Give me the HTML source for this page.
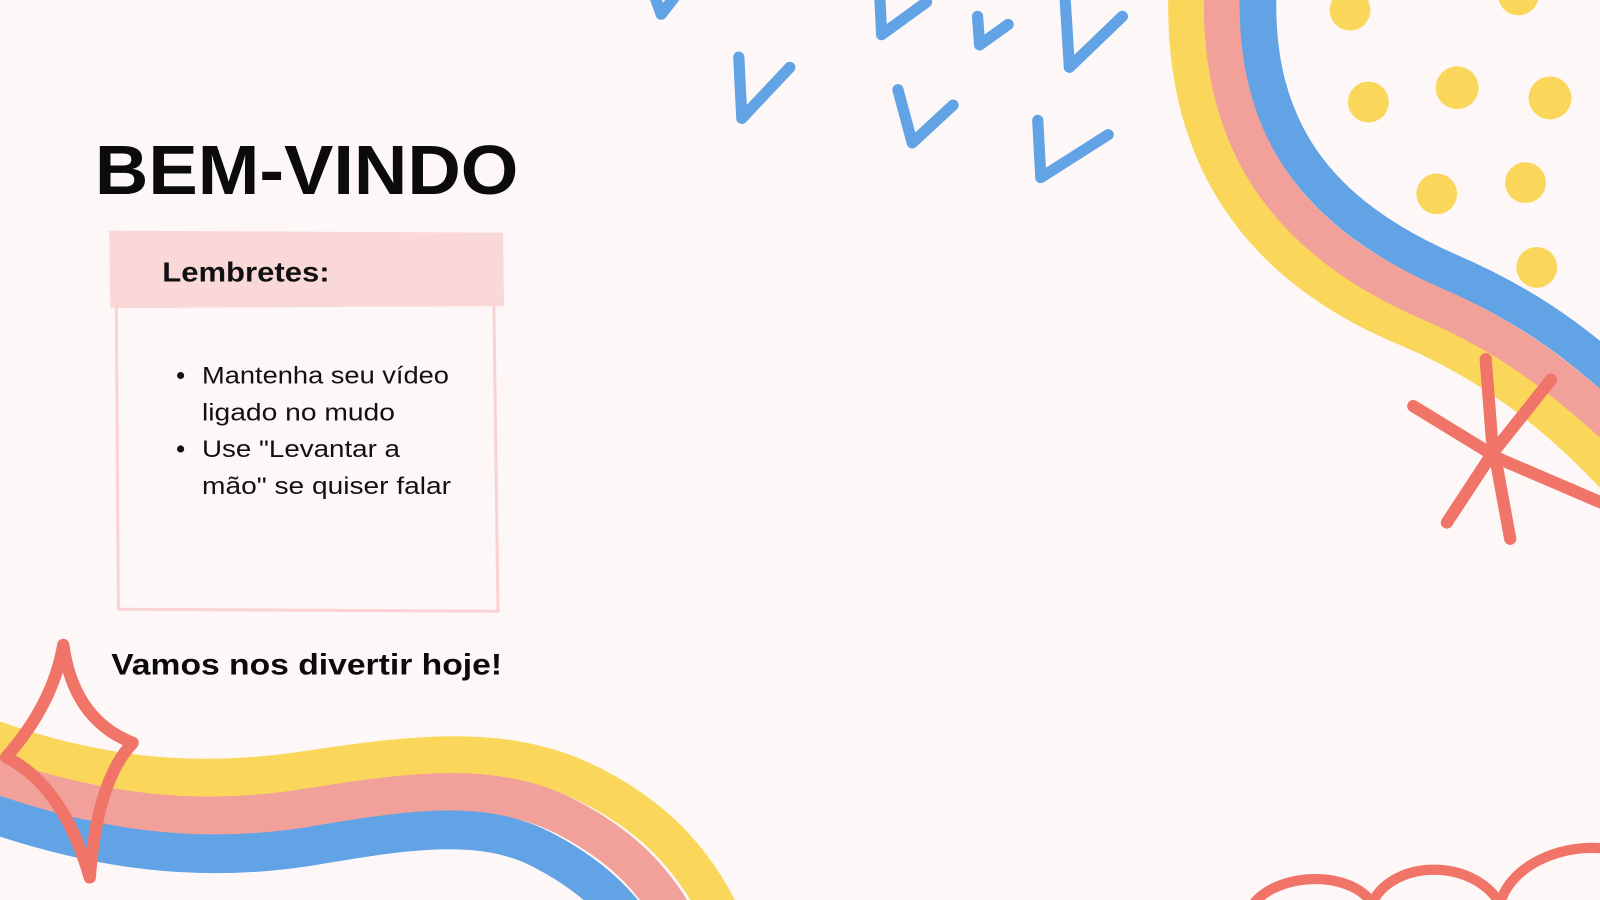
<!DOCTYPE html>
<html><head><meta charset="utf-8"><style>
html,body{margin:0;padding:0;background:#fdf8f7;}
svg{display:block;}
</style></head><body>
<svg width="1600" height="900" viewBox="0 0 1568 882" xmlns="http://www.w3.org/2000/svg">
<rect width="1568" height="882" fill="#fdf8f7"/>
<!-- top-right rainbow -->
<g fill="none" stroke-width="36">
<path d="M1163,-10 C1158,150 1230,260 1380,322 C1460,356 1525,405 1585,470" stroke="#fad75a"/>
<path d="M1198,-10 C1193,140 1262,236 1400,296 C1480,330 1532,372 1585,420" stroke="#f2a19a"/>
<path d="M1233,-10 C1228,128 1292,210 1420,266 C1492,297 1540,332 1585,372" stroke="#62a3e6"/>
</g>
<!-- dots -->
<g fill="#fad75a">
<circle cx="1323" cy="10" r="20"/><circle cx="1488" cy="-5" r="20"/>
<circle cx="1341" cy="100" r="20"/><circle cx="1428" cy="86" r="21"/><circle cx="1519" cy="96" r="21"/>
<circle cx="1408" cy="190" r="20"/><circle cx="1495" cy="179" r="20"/><circle cx="1506" cy="262" r="20"/>
</g>
<!-- asterisk -->
<g stroke="#f07468" stroke-width="12" stroke-linecap="round" fill="none">
<path d="M1456,352 L1462,430 L1480,528"/>
<path d="M1520,372 L1462,445 L1418,512"/>
<path d="M1385,398 L1470,450 L1575,495"/>
</g>
<!-- blue checks -->
<g stroke="#62a3e6" stroke-width="11" stroke-linecap="round" stroke-linejoin="round" fill="none">
<path d="M640,-8 L648,14 L662,-4"/>
<path d="M724,56 L727,116 L774,66"/>
<path d="M862,-8 L864,34 L908,2"/>
<path d="M958,16 L960,44 L988,24"/>
<path d="M1044,2 L1048,66 L1100,16"/>
<path d="M880,88 L894,140 L934,103"/>
<path d="M1017,118 L1020,174 L1086,132"/>
</g>
<!-- bottom rainbow -->
<g fill="none" stroke-width="38">
<path d="M-20,720 C100,765 200,770 300,755 C400,740 490,728 570,765 C640,798 680,842 708,900" stroke="#fad75a"/>
<path d="M-20,757 C100,800 200,808 300,792 C400,776 480,765 550,798 C610,828 640,862 662,900" stroke="#f2a19a"/>
<path d="M-20,793 C100,836 200,845 300,830 C400,813 470,802 530,832 C575,855 600,880 615,900" stroke="#62a3e6"/>
</g>
<!-- coral star -->
<path d="M62,632 Q72,705 130,728 Q95,765 88,860 Q62,770 6,742 Q52,690 62,632 Z" fill="none" stroke="#f07468" stroke-width="12" stroke-linejoin="round"/>
<!-- bottom right loops -->
<path d="M1225,892 C1240,858 1318,848 1345,885 C1362,845 1440,838 1470,885 C1482,845 1535,826 1575,832" fill="none" stroke="#f07468" stroke-width="10" stroke-linecap="round"/>
<!-- title -->
<text x="93" y="190" font-family="Liberation Sans, sans-serif" font-weight="bold" font-size="68" textLength="415" lengthAdjust="spacingAndGlyphs" fill="#0b0b0b">BEM-VINDO</text>
<!-- box -->
<path d="M107,226 L493,228 L494,300 L108,302 Z" fill="#fbd8d8"/>
<path d="M114,298 L116,597 L488,599 L484,298" fill="none" stroke="#f9d3d3" stroke-width="3"/>
<text x="159" y="276" font-family="Liberation Sans, sans-serif" font-size="27" font-weight="bold" textLength="164" lengthAdjust="spacingAndGlyphs" fill="#111">Lembretes:</text>
<g font-family="Liberation Sans, sans-serif" font-size="24" fill="#111">
<circle cx="177" cy="368" r="3.5" fill="#111"/><circle cx="177" cy="440" r="3.5" fill="#111"/>
<text x="198" y="376" textLength="242" lengthAdjust="spacingAndGlyphs">Mantenha seu vídeo</text>
<text x="198" y="412" textLength="189" lengthAdjust="spacingAndGlyphs">ligado no mudo</text>
<text x="198" y="448" textLength="194" lengthAdjust="spacingAndGlyphs">Use "Levantar a</text>
<text x="198" y="484" textLength="244" lengthAdjust="spacingAndGlyphs">mão" se quiser falar</text>
</g>
<text x="109" y="661" font-family="Liberation Sans, sans-serif" font-weight="bold" font-size="29" textLength="383" lengthAdjust="spacingAndGlyphs" fill="#0b0b0b">Vamos nos divertir hoje!</text>
</svg>
</body></html>
